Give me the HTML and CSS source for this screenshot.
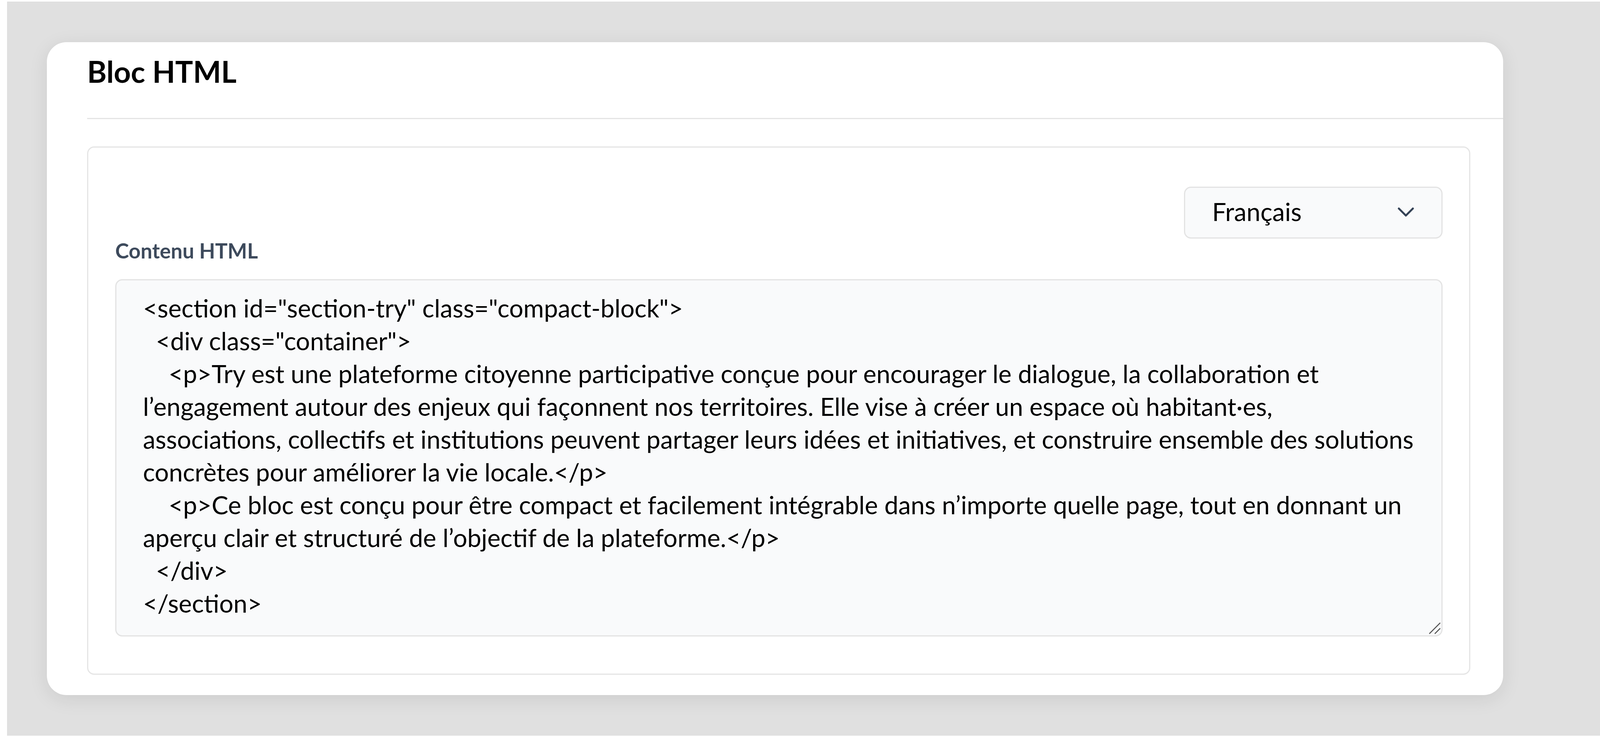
FILE: index.html
```html
<!DOCTYPE html>
<html lang="fr">
<head>
    <meta charset="utf-8">
    <meta name="viewport" content="width=device-width,initial-scale=1">
    <title>Bloc HTML</title>
    <link rel="stylesheet" href="styles.css">
</head>
<body>
    <div class="page">
        <div class="card">
            <div class="card-header">
                <h2 class="card-title">Bloc HTML</h2>
            </div>
            <div class="panel">
                <div class="lang-row">
                    <div class="lang-select">
                        <span>Français</span>
                        <svg class="chevron" width="42" height="25" viewBox="0 0 42 25">
                            <polyline points="3,3 21,21 39,3" fill="none" stroke="#334155" stroke-width="5" stroke-linecap="round" stroke-linejoin="round"/>
                        </svg>
                    </div>
                </div>
                <label class="field-label" for="html-content">Contenu HTML</label>
                <div class="field">
                    <textarea id="html-content" class="code-input" wrap="off" spellcheck="false">&lt;section id="section-try" class="compact-block"&gt;
  &lt;div class="container"&gt;
    &lt;p&gt;Try est une plateforme citoyenne participative conçue pour encourager le dialogue, la collaboration et
l’engagement autour des enjeux qui façonnent nos territoires. Elle vise à créer un espace où habitant·es,
associations, collectifs et institutions peuvent partager leurs idées et initiatives, et construire ensemble des solutions
concrètes pour améliorer la vie locale.&lt;/p&gt;
    &lt;p&gt;Ce bloc est conçu pour être compact et facilement intégrable dans n’importe quelle page, tout en donnant un
aperçu clair et structuré de l’objectif de la plateforme.&lt;/p&gt;
  &lt;/div&gt;
&lt;/section&gt;</textarea>
                    <svg class="grip" width="34" height="32" viewBox="0 0 34 32">
                        <line x1="4" y1="30" x2="32" y2="2" stroke="#555" stroke-width="2.5"/>
                        <line x1="18" y1="30" x2="32" y2="16" stroke="#555" stroke-width="2.5"/>
                    </svg>
                </div>
            </div>
        </div>
    </div>
</body>
</html>
```

FILE: styles.css
```css
html, body {
    margin: 0;
    padding: 0;
    background: #fff;
}

body {
    font-family: Lato, "Noto Sans", sans-serif;
    color: #000;
}

.page {
    margin: 4px 0 0 18px;
    height: 1880px;
    box-sizing: border-box;
    padding: 104px 0 0 102px;
    background: #e0e0e0;
}

.card {
    width: 3728px;
    box-sizing: border-box;
    padding: 28px 0 52px 103px;
    background: #fff;
    border-radius: 50px;
    box-shadow: 0 10px 50px rgba(0, 0, 0, 0.09);
}

.card-header {
    padding-bottom: 72px;
    border-bottom: 3px solid #e4e4e4;
}

.card-title {
    margin: 0;
    font-size: 76px;
    font-weight: 700;
    line-height: 94px;
}

.panel {
    margin: 70px 84px 0 0;
    padding: 100px 68px 95px 69px;
    border: 3px solid #e5e5e5;
    border-radius: 18px;
}

.lang-row {
    display: flex;
    justify-content: flex-end;
}

.lang-select {
    display: flex;
    align-items: center;
    justify-content: space-between;
    width: 662px;
    height: 133px;
    box-sizing: border-box;
    padding: 0 70px 6px 69px;
    background: #f9fafb;
    border: 3px solid #e3e3e3;
    border-radius: 18px;
    font-size: 64px;
}

.chevron {
    display: block;
    margin-top: 4px;
}

.field-label {
    display: block;
    margin: 4px 0 46px;
    font-size: 53px;
    font-weight: 700;
    line-height: 54px;
    color: #3d4a5c;
}

.field {
    position: relative;
}

.code-input {
    display: block;
    width: 100%;
    height: 915px;
    box-sizing: border-box;
    margin: 0;
    padding: 29px 68px 0;
    background: #f9fafb;
    border: 3px solid #e3e3e3;
    border-radius: 18px;
    font-family: Lato, "Noto Sans", sans-serif;
    font-size: 64px;
    line-height: 84px;
    color: #000;
    white-space: pre;
    overflow: hidden;
    resize: none;
    outline: 0;
}

.grip {
    position: absolute;
    right: 4px;
    bottom: 5px;
    pointer-events: none;
}
```
